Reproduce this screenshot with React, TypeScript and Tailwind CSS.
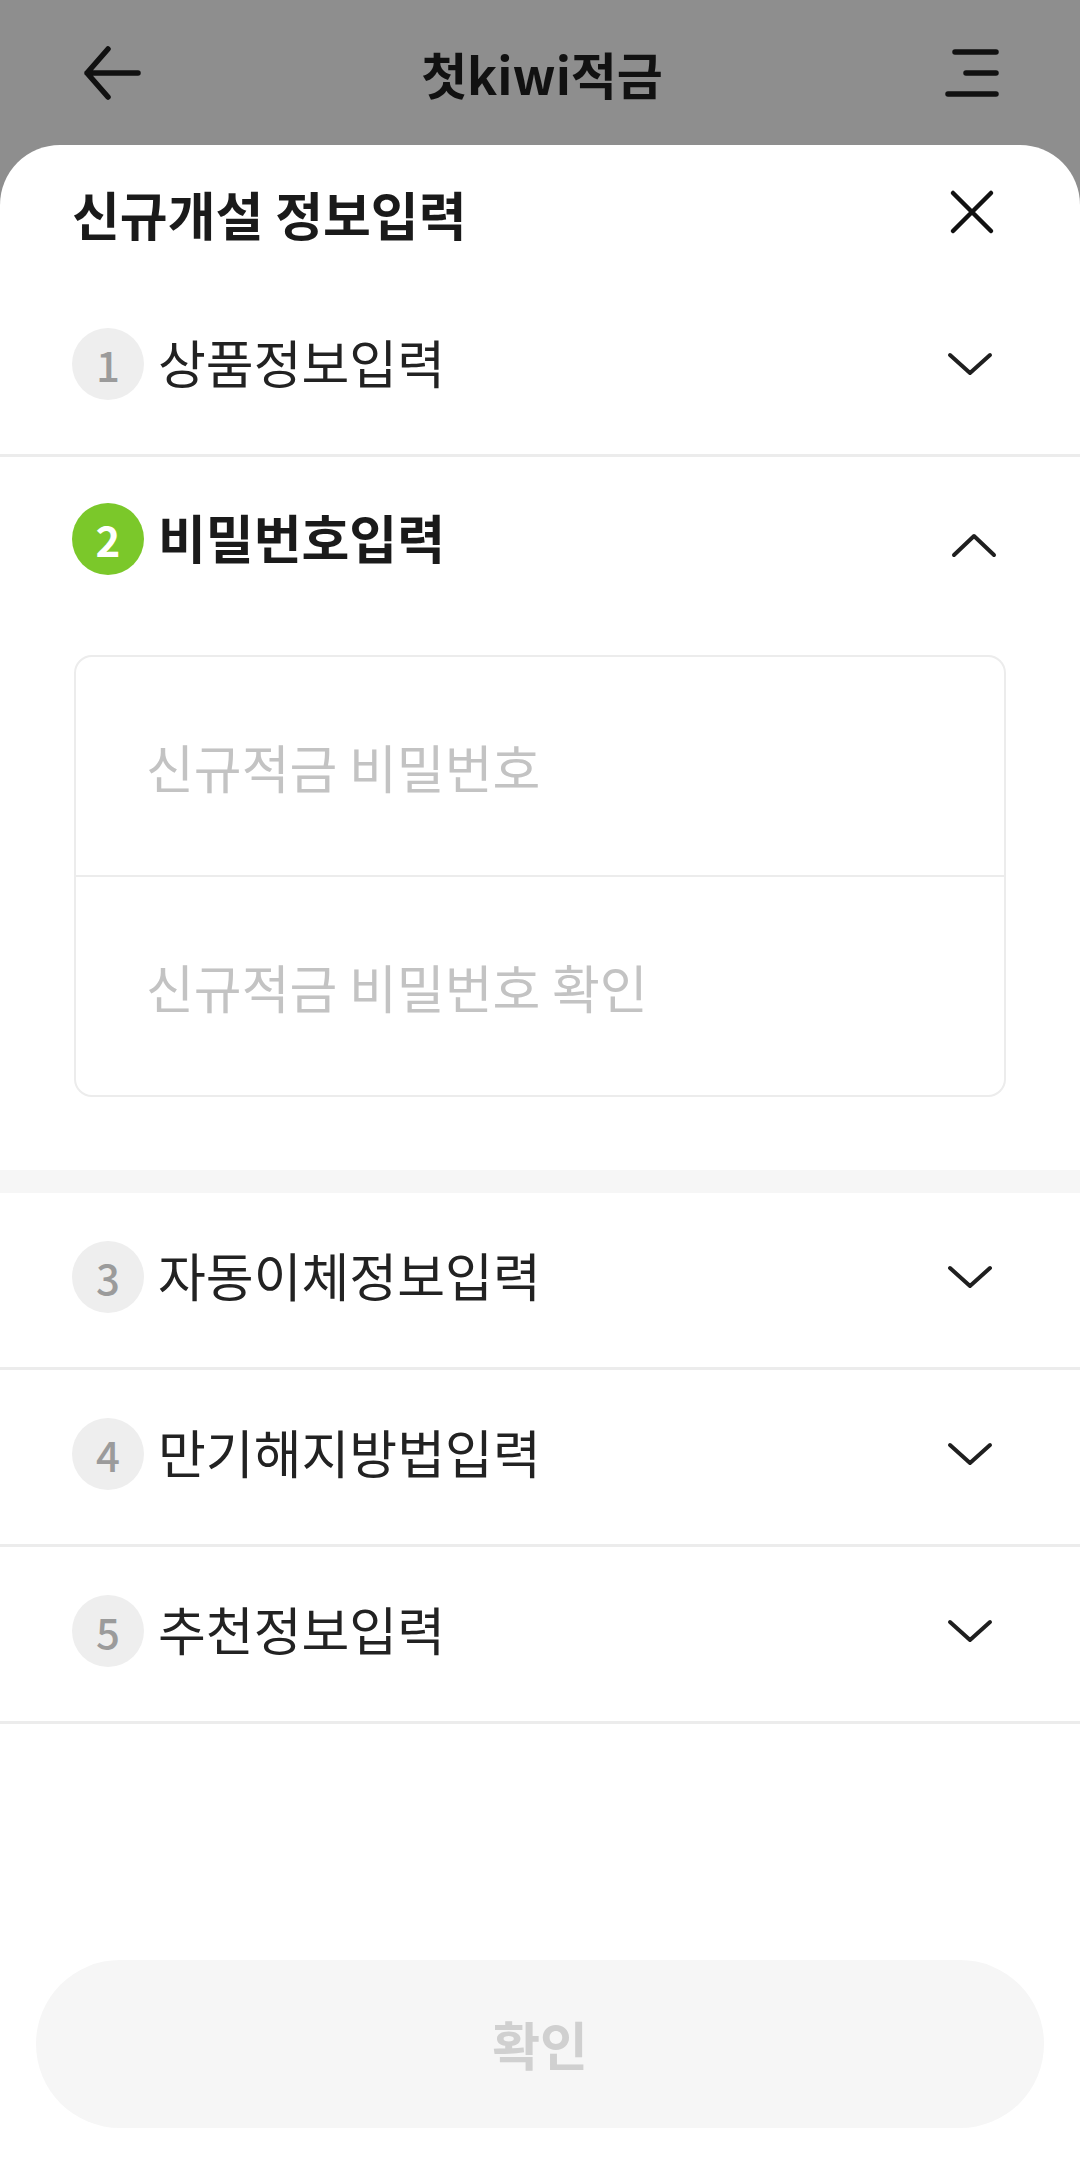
const font = "font-['Noto_Sans_CJK_KR','Noto_Sans',sans-serif]";

const closedSteps = [
  { n: 3, label: "자동이체정보입력" },
  { n: 4, label: "만기해지방법입력" },
  { n: 5, label: "추천정보입력" },
];

function Chevron({ up }: { up?: boolean }) {
  return (
    <svg width="48" height="48" viewBox="0 0 48 48" fill="none" stroke="#1f1f1f" strokeWidth="4" strokeLinecap="round" strokeLinejoin="round">
      <path d={up ? "M4 33 L24 14 L44 33" : "M4 15 L24 33 L44 15"} />
    </svg>
  );
}

function Badge({ n, active }: { n: number; active?: boolean }) {
  return (
    <div
      className={
        active
          ? "w-[72px] h-[72px] shrink-0 rounded-full bg-[#7bc82a] text-white flex items-center justify-center text-[42px] font-bold leading-none"
          : "w-[72px] h-[72px] shrink-0 rounded-full bg-[#eeeeee] text-[#9b9b9b] flex items-center justify-center text-[42px] font-medium leading-none"
      }
    >
      {n}
    </div>
  );
}

function StepRow({ n, label }: { n: number; label: string }) {
  return (
    <div className="flex items-center justify-between pl-[72px] pr-[86px] pt-[48px] pb-[54px] border-b-[3px] border-[#ececec]">
      <div className="flex items-center gap-[14px]">
        <Badge n={n} />
        <span className="text-[52px] leading-[72px] -mt-[4px] text-[#222222]">{label}</span>
      </div>
      <Chevron />
    </div>
  );
}

export default function App() {
  return (
    <div className={`w-[1080px] h-[2164px] flex flex-col bg-[#8e8e8e] ${font}`}>
      {/* dimmed page header */}
      <div className="h-[145px] shrink-0 flex items-center justify-between pl-[82px] pr-[78px]">
        <svg width="60" height="60" viewBox="0 0 60 60" fill="none" stroke="#111111" strokeWidth="5.5" strokeLinecap="round" strokeLinejoin="round">
          <path d="M26 6 L5 30 L26 54 M5 30 L56 30" />
        </svg>
        <h1 className="text-[50px] font-bold leading-[60px] text-[#111111]">첫kiwi적금</h1>
        <svg width="60" height="60" viewBox="0 0 60 60" fill="none" stroke="#111111" strokeWidth="5.5" strokeLinecap="round">
          <path d="M13 9 L54 9 M24 30 L54 30 M6 51 L54 51" />
        </svg>
      </div>

      {/* bottom sheet */}
      <div className="flex-1 flex flex-col bg-white rounded-t-[60px]">
        <div className="h-[135px] flex items-start justify-between pl-[72px] pr-[84px] pt-[43px]">
          <h2 className="text-[52px] font-bold leading-[60px] -mt-[4px] text-[#1a1a1a]">신규개설 정보입력</h2>
          <svg width="48" height="48" viewBox="0 0 48 48" fill="none" stroke="#111111" strokeWidth="4.5" strokeLinecap="round">
            <path d="M5 5 L43 43 M43 5 L5 43" />
          </svg>
        </div>

        <StepRow n={1} label="상품정보입력" />

        {/* open step */}
        <div className="pt-[46px] pb-[73px]">
          <div className="flex items-center justify-between pl-[72px] pr-[82px]">
            <div className="flex items-center gap-[14px]">
              <Badge n={2} active />
              <span className="text-[52px] leading-[72px] -mt-[4px] font-bold text-[#1a1a1a]">비밀번호입력</span>
            </div>
            <div className="mt-[14px]">
              <Chevron up />
            </div>
          </div>
          <div className="mx-[74px] mt-[80px] border-2 border-[#ececec] rounded-[18px] overflow-hidden">
            <input
              type="password"
              placeholder="신규적금 비밀번호"
              className="block w-full h-[218px] px-[70px] text-[52px] bg-transparent outline-none text-[#222222] placeholder:text-[#c3c3c3]"
            />
            <div className="h-[2px] bg-[#ececec]" />
            <input
              type="password"
              placeholder="신규적금 비밀번호 확인"
              className="block w-full h-[218px] px-[70px] text-[52px] bg-transparent outline-none text-[#222222] placeholder:text-[#c3c3c3]"
            />
          </div>
        </div>
        <div className="h-[23px] bg-[#f6f6f6]" />

        {closedSteps.map((s) => (
          <StepRow key={s.n} n={s.n} label={s.label} />
        ))}

        <div className="flex-1" />
        <div className="px-[36px] pb-[36px]">
          <button className="w-full h-[168px] rounded-full bg-[#f6f6f6] text-[52px] font-bold text-[#d0d0d0]">
            확인
          </button>
        </div>
      </div>
    </div>
  );
}
